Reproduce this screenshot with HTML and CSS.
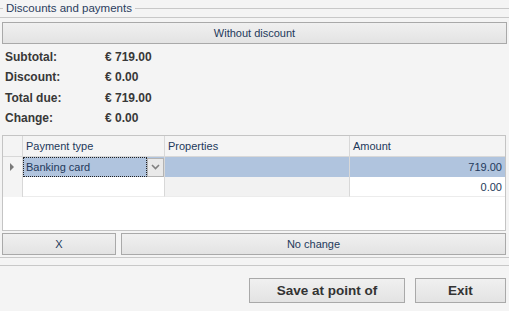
FILE: index.html
```html
<!DOCTYPE html>
<html>
<head>
  <title>Discounts and payments</title>
  <link rel="stylesheet" href="styles.css">
</head>
<body>
<div class="group-head"><span>Discounts and payments</span></div>
<div class="rule"></div>

<button class="btn wide">Without discount</button>

<div class="summary">
  <span class="lbl">Subtotal:</span><span class="val">&euro; 719.00</span>
  <span class="lbl">Discount:</span><span class="val">&euro; 0.00</span>
  <span class="lbl">Total due:</span><span class="val">&euro; 719.00</span>
  <span class="lbl">Change:</span><span class="val">&euro; 0.00</span>
</div>

<div class="grid">
  <div class="row head">
    <div class="cell rh"></div>
    <div class="cell c-type">Payment type</div>
    <div class="cell c-prop">Properties</div>
    <div class="cell c-amt">Amount</div>
  </div>
  <div class="row selected">
    <div class="cell rh"><span class="arrow"></span></div>
    <div class="cell c-type">
      <span class="focus">Banking card</span>
      <span class="drop">
        <svg width="9" height="6" viewBox="0 0 9 6"><polyline points="1,1 4.5,4.5 8,1" fill="none" stroke="#808080" stroke-width="1.6"/></svg>
      </span>
    </div>
    <div class="cell c-prop"></div>
    <div class="cell c-amt num">719.00</div>
  </div>
  <div class="row">
    <div class="cell rh"></div>
    <div class="cell c-type"></div>
    <div class="cell c-prop ro"></div>
    <div class="cell c-amt num">0.00</div>
  </div>
</div>

<div class="actions">
  <button class="btn clear">X</button>
  <button class="btn nochange">No change</button>
</div>

<div class="sep"></div>

<div class="footer">
  <button class="btn big save">Save at point of</button>
  <button class="btn big exit">Exit</button>
</div>
</body>
</html>
```

FILE: styles.css
```css
body {
  font-family: "Liberation Sans", Arial, sans-serif;
  font-size: 11px;
  color: #23395b;
  background: #f4f4f4;
  margin: 0;
  width: 509px;
  height: 311px;
  overflow: hidden;
}
.group-head {
  display: flex;
  align-items: center;
  height: 16px;
}
.group-head::before {
  content: "";
  width: 3px;
  border-top: 1px solid #c8c8c8;
}
.group-head::after {
  content: "";
  flex: 1;
  border-top: 1px solid #c8c8c8;
  margin-left: 3px;
}
.group-head span {
  padding-left: 3px;
  color: #2b3d5e;
  font-size: 11.5px;
}
.rule {
  border-top: 1px solid #c8c8c8;
  margin-top: 1px;
}
.btn {
  font-family: "Liberation Sans", Arial, sans-serif;
  font-size: 11px;
  color: #23395b;
  background: linear-gradient(#f0f0f0, #e3e3e3);
  border: 1px solid #a9a9a9;
  padding: 0;
  margin: 0;
  box-sizing: border-box;
}
.wide {
  display: block;
  width: 505px;
  height: 22px;
  margin: 4px 0 0 2px;
}
.summary {
  display: grid;
  grid-template-columns: 100px auto;
  grid-auto-rows: 20.33px;
  align-items: center;
  padding: 3px 0 0 5px;
  font-size: 12px;
  font-weight: bold;
  color: #383838;
}
.grid {
  margin: 7px 3px 0 2px;
  height: 96px;
  box-sizing: border-box;
  border: 1px solid #c4c4c4;
  background: #fff;
}
.row {
  display: flex;
  height: 20px;
}
.cell {
  box-sizing: border-box;
  border-right: 1px solid #d8d8d8;
  display: flex;
  align-items: center;
  padding: 0 3px;
  position: relative;
}
.rh {
  width: 20px;
  background: #f4f4f4;
  justify-content: center;
}
.c-type { width: 142px; }
.c-prop { width: 185px; }
.c-amt { flex: 1; border-right: none; }
.head {
  background: #f4f4f4;
  border-bottom: 1px solid #d8d8d8;
}
.selected .cell { background: #b0c4de; }
.selected .rh { background: #f4f4f4; }
.row:last-child .cell { border-bottom: 1px solid #ececec; }
.row:last-child .rh { border-bottom: none; }
.ro { background: #f2f2f2; }
.num { justify-content: flex-end; }
.arrow {
  width: 0;
  height: 0;
  border-top: 4px solid transparent;
  border-bottom: 4px solid transparent;
  border-left: 4px solid #7a7a7a;
  margin-left: -2px;
}
.selected .c-type { padding: 0; }
.focus {
  flex: 1;
  height: 100%;
  box-sizing: border-box;
  border: 1px dotted #222;
  display: flex;
  align-items: center;
  padding-left: 2px;
}
.drop {
  width: 17px;
  height: 19px;
  box-sizing: border-box;
  border: 1px solid #b4b4b4;
  background: #e9e9e9;
  display: flex;
  align-items: center;
  justify-content: center;
}
.actions {
  display: flex;
  gap: 5px;
  margin: 2px 3px 0 2px;
}
.actions .btn { height: 22px; }
.clear { width: 114px; }
.nochange { flex: 1; }
.sep {
  margin-top: 2px;
  height: 7px;
  border-top: 1px solid #c8c8c8;
  border-bottom: 1px solid #c8c8c8;
}
.footer {
  display: flex;
  justify-content: flex-end;
  gap: 10px;
  margin: 12px 3px 0 0;
}
.big {
  height: 25px;
  font-size: 13.5px;
  font-weight: bold;
  color: #333;
}
.save { width: 156px; }
.exit { width: 91px; }
```
